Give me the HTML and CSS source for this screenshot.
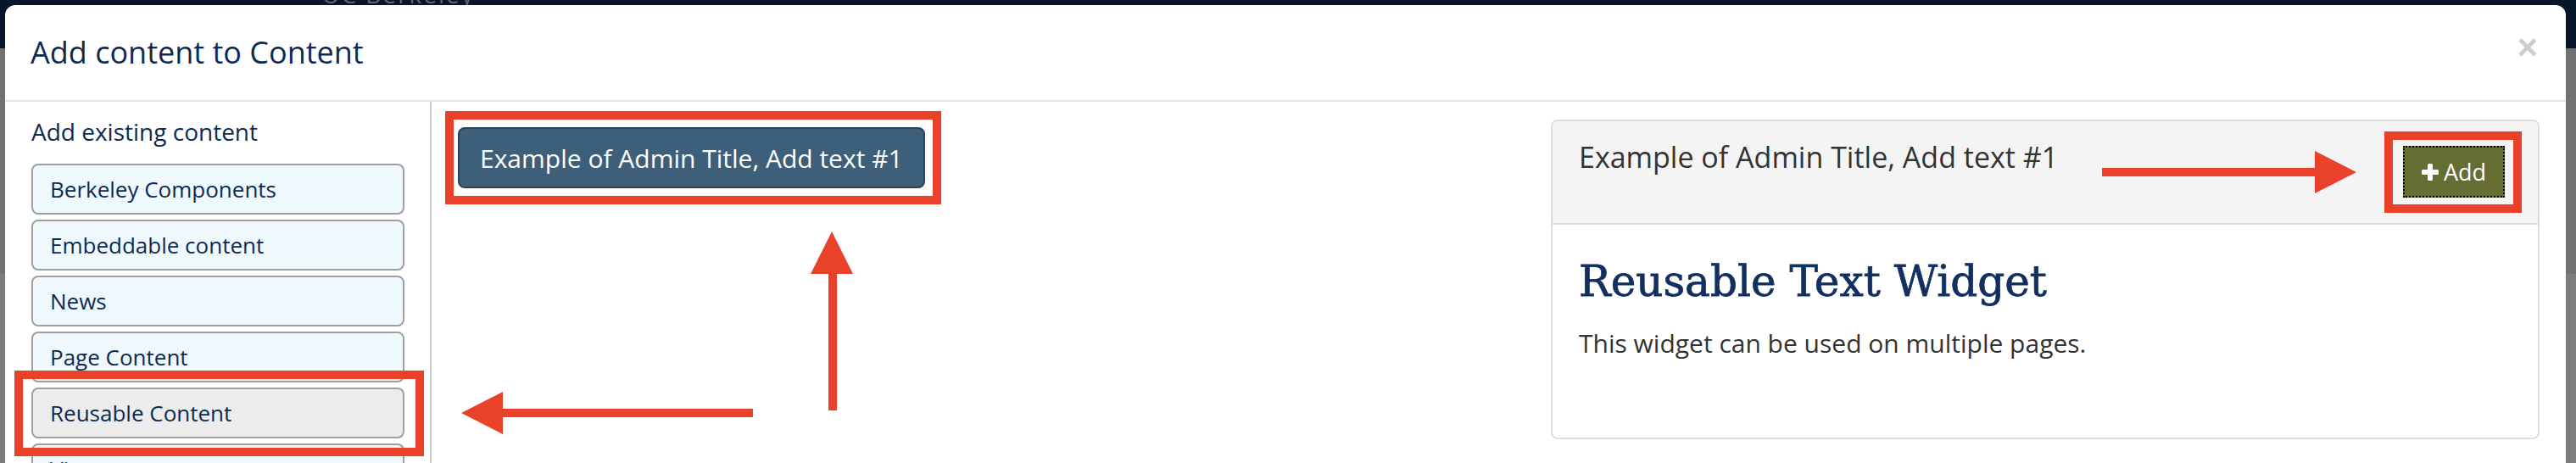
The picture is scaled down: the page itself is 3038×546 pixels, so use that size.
FILE: index.html
```html
<!DOCTYPE html>
<html lang="en">
<head>
    <meta charset="UTF-8">
    <meta name="viewport" content="width=device-width, initial-scale=1.0">
    <title>Add content to Content</title>
    <link rel="stylesheet" href="styles.css">
</head>
<body>
    <div class="site-strip"><span class="site-name">UC Berkeley</span></div>

    <div class="modal">
        <div class="modal-header">
            <h4 class="modal-title">Add content to Content</h4>
            <button class="close" type="button">&times;</button>
        </div>

        <div class="modal-body">
            <aside class="sidebar">
                <h5>Add existing content</h5>
                <ul class="type-list">
                    <li>Berkeley Components</li>
                    <li>Embeddable content</li>
                    <li>News</li>
                    <li>Page Content</li>
                    <li class="active">Reusable Content</li>
                    <li>Views</li>
                </ul>
            </aside>

            <section class="results">
                <button class="result-btn" type="button">Example of Admin Title, Add text #1</button>
            </section>

            <section class="preview">
                <div class="preview-head">
                    <span class="preview-title">Example of Admin Title, Add text #1</span>
                    <button class="add-btn" type="button">
                        <svg width="20" height="20" viewBox="0 0 20 20"><path d="M7 1.5Q7 0 8.5 0h3Q13 0 13 1.5V7h5.5Q20 7 20 8.5v3q0 1.5-1.5 1.5H13v5.5q0 1.5-1.5 1.5h-3Q7 20 7 18.5V13H1.5Q0 13 0 11.5v-3Q0 7 1.5 7H7z" fill="#fff"/></svg>
                        Add
                    </button>
                </div>
                <div class="preview-body">
                    <h2>Reusable Text Widget</h2>
                    <p>This widget can be used on multiple pages.</p>
                </div>
            </section>
        </div>
    </div>

    <!-- red annotation marks drawn over the screenshot -->
    <svg class="annotations" width="3038" height="546" viewBox="0 0 3038 546">
        <g fill="none" stroke="#e9412a" stroke-width="10">
            <rect x="22" y="442" width="473" height="91"/>
            <rect x="530" y="136" width="575" height="100"/>
            <rect x="2817" y="160" width="152" height="86"/>
        </g>
        <g fill="#e9412a">
            <rect x="592" y="482" width="296" height="10"/>
            <polygon points="544,487 593,462 593,512"/>
            <rect x="977" y="322" width="10" height="162"/>
            <polygon points="981,273 956,323 1006,323"/>
            <rect x="2479" y="198" width="252" height="10"/>
            <polygon points="2730,178 2779,203 2730,228"/>
        </g>
    </svg>
</body>
</html>
```

FILE: styles.css
```css
body {
    margin: 0;
    height: 546px;
    overflow: hidden;
    font-family: "Open Sans", "Liberation Sans", sans-serif;
    background: linear-gradient(#071629 0 57px, #727272 57px 323px, #7d7d7d 323px);
}

.site-strip {
    height: 6px;
    overflow: hidden;
    padding-left: 380px;
}

.site-name {
    display: block;
    margin-top: -22px;
    font-size: 28px;
    line-height: 30px;
    letter-spacing: 2px;
    color: #5d6673;
}

.modal {
    margin-left: 6px;
    width: 3020px;
    height: 600px;
    background: white;
    border-radius: 12px 12px 0 0;
    color: #0d2b52;
}

.modal-header {
    display: flex;
    justify-content: space-between;
    align-items: flex-start;
    box-sizing: border-box;
    height: 114px;
    padding: 30px 33px 0 30px;
    border-bottom: 2px solid #e5e5e5;
}

.modal-title {
    margin: 0;
    font-size: 36px;
    font-weight: normal;
    line-height: 51px;
}

.close {
    margin-top: -1px;
    padding: 0;
    border: 0;
    background: none;
    font-family: "Liberation Sans", sans-serif;
    font-size: 42px;
    font-weight: bold;
    line-height: 42px;
    color: #cdcdcd;
}

.modal-body {
    display: flex;
    align-items: flex-start;
}

.sidebar {
    box-sizing: border-box;
    width: 503px;
    height: 480px;
    padding: 15px 30px 0 31px;
    border-right: 2px solid #cccccc;
}

.sidebar h5 {
    margin: 0 0 18px;
    font-size: 28px;
    font-weight: normal;
    line-height: 40px;
}

.type-list {
    list-style: none;
    margin: 0;
    padding: 0;
}

.type-list li {
    box-sizing: border-box;
    height: 60px;
    margin-bottom: 6px;
    padding: 0 20px;
    border: 2px solid #a0a0a0;
    border-radius: 8px;
    background: #eef8fd;
    font-size: 26px;
    line-height: 56px;
}

.type-list li.active {
    background: #ececec;
}

.results {
    flex: 1;
    padding: 30px 31px 0;
}

.result-btn {
    height: 72px;
    padding: 0 24px;
    border: 2px solid #2c4457;
    border-radius: 8px;
    background: #3d5f79;
    color: white;
    font-family: "Open Sans", sans-serif;
    font-size: 30px;
}

.preview {
    width: 1166px;
    margin: 21px 31px 0 0;
    box-sizing: border-box;
    border: 2px solid #dddddd;
    border-radius: 8px;
}

.preview-head {
    display: flex;
    justify-content: space-between;
    align-items: flex-start;
    box-sizing: border-box;
    height: 122px;
    padding: 18px 39px 0 31px;
    background: #f4f4f4;
    border-bottom: 2px solid #dddddd;
    border-radius: 6px 6px 0 0;
}

.preview-title {
    font-size: 34px;
    line-height: 48px;
    color: #333333;
}

.add-btn {
    display: flex;
    align-items: center;
    justify-content: center;
    gap: 6px;
    box-sizing: border-box;
    width: 120px;
    height: 61px;
    margin-top: 11px;
    padding: 0;
    border: 2px dotted #000000;
    background: #666d33;
    color: white;
    font-family: "Open Sans", sans-serif;
    font-size: 27px;
}

.preview-body {
    box-sizing: border-box;
    height: 251px;
    padding: 40px 31px 0;
}

.preview-body h2 {
    margin: 0 0 23px;
    font-family: "DejaVu Serif", "Liberation Serif", serif;
    font-size: 50px;
    font-weight: normal;
    line-height: 55px;
    color: #12305f;
    -webkit-text-stroke: 0.8px #12305f;
}

.preview-body p {
    margin: 0;
    font-size: 30px;
    line-height: 43px;
    color: #333333;
}

.annotations {
    position: absolute;
    top: 0;
    left: 0;
    pointer-events: none;
}
```
